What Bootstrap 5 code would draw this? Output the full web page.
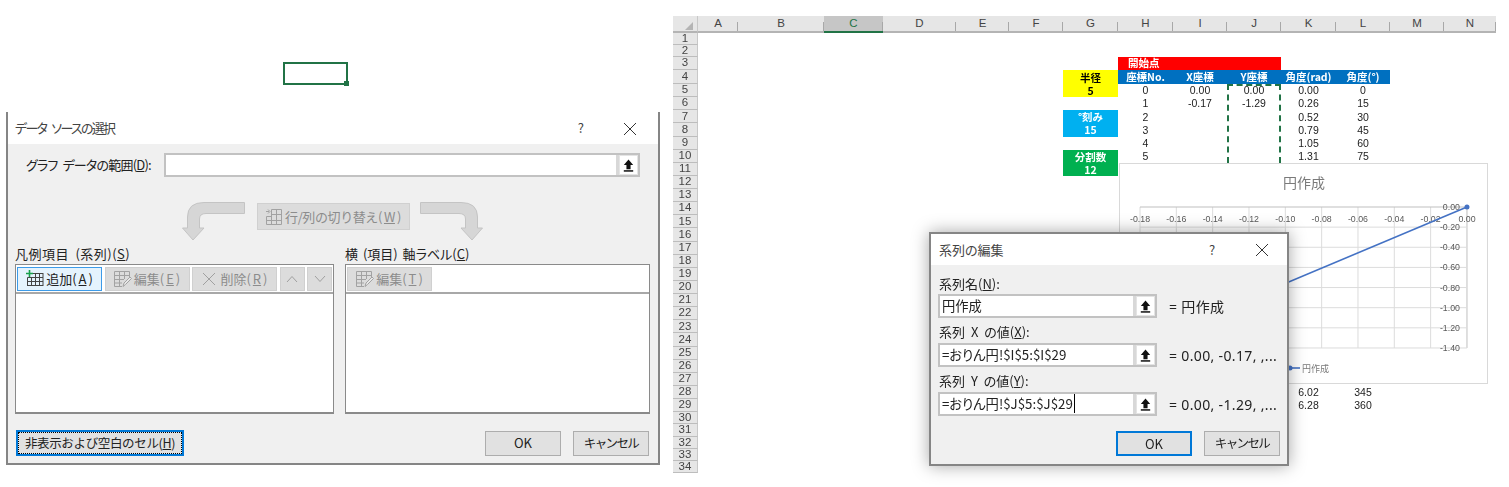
<!DOCTYPE html>
<html lang="ja">
<head>
<meta charset="UTF-8">
<title>データ ソースの選択</title>
<link href="https://cdn.jsdelivr.net/npm/bootstrap@5.3.0/dist/css/bootstrap.min.css" rel="stylesheet">
<style>
    body { background: #fff; width: 1509px; height: 487px; overflow: hidden; position: relative; font-family: "Noto Sans CJK JP", "Liberation Sans", sans-serif; font-size: 13px; color: #222; filter: blur(.3px); }

    /* dialogs */
    .win { position: absolute; background: #f0f0f0; font-feature-settings: "palt"; }
    .win-left { left: 6px; top: 112px; width: 654px; height: 353px; border: 2px solid #858585; border-top: 0; }
    .win-right { left: 929px; top: 232px; width: 360px; height: 234px; border: 2px solid #858585; box-shadow: 0 0 16px rgba(0,0,0,.35); z-index: 5; }
    .win-title { background: #fff; color: #444; font-size: 13px; padding-left: 8px; }
    .win-left .win-title { height: 32px; padding-left: 7px; padding-right: 3px; letter-spacing: -1.7px; word-spacing: 4px; }
    .win-right .win-title { height: 31px; }
    .title-help { width: 50px; text-align: center; font-size: 13px; }
    .title-close { width: 50px; text-align: center; line-height: 1; }

    .fld { display: flex; background: #fff; border: 2px solid #c2c2c2; height: 24px; }
    .fld-text { flex: 1; padding-left: 2px; line-height: 20px; font-size: 13.3px; white-space: nowrap; overflow: hidden; color: #222; }
    .fld-btn { width: 22px; background: #fff; border-left: 3px solid #d8d8d8; box-shadow: inset 0 0 0 1px #e4e4e4; display: flex; align-items: center; justify-content: center; }
    .caret-bar { border-right: 1px solid #000; padding-right: 1px; }

    .xl-btn { border: 1px solid #adadad; background: #e1e1e1; color: #222; border-radius: 0; font-size: 13px; padding: 0; display: flex; align-items: center; justify-content: center; }
    .xl-btn-off { color: #8c8c8c; background: #dcdcdc; border-color: #d0d0d0; }
    .xl-btn-default { border: 2px solid #0078d7; }
    .xl-btn-focus { border: 2px solid #0078d7; outline: 1px dotted #000; outline-offset: -3px; }
    .dlg-foot-btn { width: 76px; height: 25px; }
    .kana-tight { font-size: 12.5px; letter-spacing: -1.6px; }

    .src-body { padding: 9px 9px 0 7px; }
    .range-label { width: 149px; padding-left: 11px; white-space: nowrap; letter-spacing: -.8px; word-spacing: 3px; }
    .range-fld { width: 476px; }
    .swap-row { margin-top: 25px; height: 39px; }
    .swap-btn { width: 153px; height: 27px; margin: 1px 10px 0 12px; gap: 2px; letter-spacing: -.4px; }
    .list-area { margin-top: 6px; }
    .list-col-l { width: 319px; }
    .list-col-l .list-label { letter-spacing: .5px; word-spacing: 3px; }
    .list-col-r { width: 305px; margin-right: -1px; }
    .list-label { height: 17px; line-height: 14px; white-space: nowrap; word-spacing: 2px; }
    .list-box { height: 150px; background: #fff; border: 1px solid #8a8a8a; border-bottom-width: 2px; }
    .list-tools { height: 29px; border-bottom: 2px solid #a8a8a8; padding: 2px 1px; gap: 2.5px; }
    .tool-btn { width: 85px; height: 24px; gap: 2px; }
    .tool-btn-add { background: #e5f3fd; border: 1px solid #3d9be8; color: #222; }
    .tool-btn-s { width: 25px; height: 24px; }
    .src-foot { margin-top: 16px; }
    .hide-btn { width: 168px; height: 26px; margin-left: 1px; font-size: 12.5px; letter-spacing: -.35px; }

    .ser-body { padding: 9px 7px 0 7px; }
    .ser-label { padding-left: 1px; height: 25px; display: flex; align-items: flex-end; padding-bottom: 2px; white-space: pre; word-spacing: 3px; }
    .ser-label-first { height: 20px; padding-bottom: 1px; }
    .ser-fld { width: 219px; }
    .ser-val { margin-left: 12px; font-family: "Noto Sans", "Noto Sans CJK JP", sans-serif; font-size: 14px; letter-spacing: .35px; white-space: nowrap; }
    .ser-foot { margin-top: 15px; }

    /* selected cell on the left */
    .cell-sel { position: absolute; left: 283px; top: 62px; width: 65px; height: 23px; border: 2px solid #217346; }
    .cell-sel::after { content: ""; position: absolute; right: -3px; bottom: -3px; width: 5px; height: 5px; background: #217346; }

    /* spreadsheet */
    .sheet { position: absolute; left: 673px; top: 16px; display: grid; font-family: "Liberation Sans", sans-serif; font-size: 10.5px; color: #222; }
    .sheet-cell { display: flex; align-items: center; justify-content: center; white-space: nowrap; line-height: 1; }
    .col-head { background: #e6e6e6; border-bottom: 2px solid #b4b4b4; color: #444; font-size: 11.5px; position: relative; }
    .col-head::after { content: ""; position: absolute; right: 0; bottom: 0; width: 1px; height: 9px; background: #a8a8a8; }
    .col-head-on { background: #c6c6c6; color: #217346; border-bottom-color: #217346; }
    .row-head { background: #e6e6e6; border-bottom: 1px solid #bdbdbd; border-right: 1px solid #c8c8c8; color: #444; font-size: 11.5px; }
    .corner { background: #e6e6e6; border-bottom: 2px solid #b4b4b4; border-right: 1px solid #c8c8c8; }
    .corner svg { margin: 6px 0 0 8px; }
    .hd-cell { font-family: "Noto Sans CJK JP", sans-serif; font-weight: 700; font-size: 10.5px; color: #fff; }
    .hd-red { background: #f00; justify-content: flex-start; padding-left: 10px; }
    .hd-blue { background: #0070c0; }
    .param { flex-direction: column; font-family: "Noto Sans CJK JP", sans-serif; font-weight: 700; font-size: 10.5px; line-height: 13px; color: #fff; }
    .param-y { background: #ff0; color: #000; }
    .param-b { background: #00b0f0; }
    .param-g { background: #00b050; }
    .ants { border: 2px dashed #217346; border-bottom: 0; }

    .chart-box { position: absolute; left: 1119px; top: 163px; width: 369px; height: 221px; background: #fff; border: 1px solid #d9d9d9; z-index: 2; }
    .chart-box text { font-family: "Liberation Sans", sans-serif; font-size: 8.8px; fill: #595959; }
    .chart-box .cjk { font-family: "Noto Sans CJK JP", sans-serif; }
</style>
</head>
<body>

<svg width="0" height="0" class="position-absolute">
    <defs>
        <symbol id="ic-up" viewBox="0 0 16 16"><path d="M8 1.500 13 7.500H10.200V12H5.800V7.500H3Z" fill="#111"/><rect x="3" y="13" width="10" height="1.600" fill="#111"/></symbol>
        <symbol id="ic-add" viewBox="0 0 18 18">
            <path d="M7 3.500H17M1.500 7.500H17M1.500 11.500H17M1.500 15.500H17M1.500 7.500V16M5.500 7.500V16M9.500 3V16M13.500 3V16M17 3V16" stroke="#444" fill="none"/>
            <path d="M3.500 0V7M0 3.500H7" stroke="#17a04c" stroke-width="1.600" fill="none"/>
        </symbol>
        <symbol id="ic-edit" viewBox="0 0 18 18">
            <path d="M.5 1.500H15.500V7M.5 1.500V16.500H8M.5 5.500H15.500M.5 9.500H10M.5 13H8M5.500 1.500V16.500M10.500 1.500V9" stroke="#a2a2a2" fill="none"/>
            <path d="M9 16.500 10 13 16 7 17.500 8.500 11.500 14.500Z" stroke="#a2a2a2" fill="#e8e8e8"/>
        </symbol>
        <symbol id="ic-x" viewBox="0 0 14 14"><path d="M1 1 13 13M13 1 1 13" stroke="#a0a0a0" fill="none"/></symbol>
        <symbol id="ic-swap" viewBox="0 0 18 18">
            <path d="M6.500 1.500H16.500V16.500H1.500V8.500M1.500 12.500H16.500M6.500 1.500V16.500M11.500 1.500V16.500M6.500 6.500H16.500M1.500 8.500H6" stroke="#a2a2a2" fill="none"/>
            <path d="M1 3.500H4M3 1.500 5 3.500 3 5.500" stroke="#a2a2a2" fill="none"/>
        </symbol>
        <symbol id="ic-bend" viewBox="0 0 63 39"><path d="M62.500 .5H22Q5.500 .5 5.500 15V26H.5L11 38 22 26H17.500V17Q17.500 11.500 24 11.500H62.500Z" fill="#d6d6d6" stroke="#c4c4c4"/></symbol>
    </defs>
</svg>

<div class="cell-sel"></div>

<!-- データ ソースの選択 -->
<div class="win win-left">
    <div class="win-title d-flex align-items-center">
        <span class="flex-grow-1">データ ソースの選択</span>
        <span class="title-help">?</span>
        <span class="title-close"><svg width="14" height="14"><path d="M1 1 13 13M13 1 1 13" stroke="#333" fill="none"/></svg></span>
    </div>
    <div class="src-body">
        <div class="d-flex align-items-center">
            <label class="range-label">グラフ データの範囲(<u>D</u>):</label>
            <div class="fld range-fld">
                <div class="fld-text"></div>
                <div class="fld-btn"><svg width="15" height="15"><use href="#ic-up"/></svg></div>
            </div>
        </div>
        <div class="swap-row d-flex justify-content-center align-items-start">
            <svg width="63" height="39"><use href="#ic-bend"/></svg>
            <button class="xl-btn xl-btn-off swap-btn"><svg width="18" height="18"><use href="#ic-swap"/></svg>行/列の切り替え(<u>W</u>)</button>
            <svg width="63" height="39" style="transform: scaleX(-1)"><use href="#ic-bend"/></svg>
        </div>
        <div class="list-area d-flex justify-content-between">
            <div class="list-col-l">
                <div class="list-label">凡例項目 (系列)(<u>S</u>)</div>
                <div class="list-box">
                    <div class="list-tools d-flex">
                        <button class="xl-btn tool-btn tool-btn-add"><svg width="18" height="18"><use href="#ic-add"/></svg>追加(<u>A</u>)</button>
                        <button class="xl-btn xl-btn-off tool-btn"><svg width="18" height="18"><use href="#ic-edit"/></svg>編集(<u>E</u>)</button>
                        <button class="xl-btn xl-btn-off tool-btn"><svg width="14" height="14"><use href="#ic-x"/></svg>&nbsp;削除(<u>R</u>)</button>
                        <button class="xl-btn xl-btn-off tool-btn-s"><svg width="12" height="8"><path d="M1 7 6 1.500 11 7" stroke="#a0a0a0" fill="none"/></svg></button>
                        <button class="xl-btn xl-btn-off tool-btn-s"><svg width="12" height="8"><path d="M1 1 6 6.500 11 1" stroke="#a0a0a0" fill="none"/></svg></button>
                    </div>
                </div>
            </div>
            <div class="list-col-r">
                <div class="list-label">横 (項目) 軸ラベル(<u>C</u>)</div>
                <div class="list-box">
                    <div class="list-tools d-flex">
                        <button class="xl-btn xl-btn-off tool-btn"><svg width="18" height="18"><use href="#ic-edit"/></svg>編集(<u>T</u>)</button>
                    </div>
                </div>
            </div>
        </div>
        <div class="src-foot d-flex align-items-center">
            <button class="xl-btn xl-btn-focus hide-btn me-auto">非表示および空白のセル(<u>H</u>)</button>
            <button class="xl-btn dlg-foot-btn me-2 ms-1">OK</button>
            <button class="xl-btn dlg-foot-btn kana-tight ms-1">キャンセル</button>
        </div>
    </div>
</div>

<!-- spreadsheet, cells come from the script below -->
<div class="sheet" id="sheet"></div>
<div class="chart-box"><svg width="367" height="219" id="chart"></svg></div>

<!-- 系列の編集 -->
<div class="win win-right">
    <div class="win-title d-flex align-items-center">
        <span class="flex-grow-1">系列の編集</span>
        <span class="title-help">?</span>
        <span class="title-close"><svg width="14" height="14"><path d="M1 1 13 13M13 1 1 13" stroke="#333" fill="none"/></svg></span>
    </div>
    <div class="ser-body">
        <div class="ser-label ser-label-first">系列名(<u>N</u>):</div>
        <div class="d-flex align-items-center">
            <div class="fld ser-fld"><div class="fld-text">円作成</div><div class="fld-btn"><svg width="15" height="15"><use href="#ic-up"/></svg></div></div>
            <div class="ser-val">= 円作成</div>
        </div>
        <div class="ser-label">系列 X の値(<u>X</u>):</div>
        <div class="d-flex align-items-center">
            <div class="fld ser-fld"><div class="fld-text">=おりん円!$I$5:$I$29</div><div class="fld-btn"><svg width="15" height="15"><use href="#ic-up"/></svg></div></div>
            <div class="ser-val">= 0.00, -0.17, ,...</div>
        </div>
        <div class="ser-label">系列 Y の値(<u>Y</u>):</div>
        <div class="d-flex align-items-center">
            <div class="fld ser-fld"><div class="fld-text"><span class="caret-bar">=おりん円!$J$5:$J$29</span></div><div class="fld-btn"><svg width="15" height="15"><use href="#ic-up"/></svg></div></div>
            <div class="ser-val">= 0.00, -1.29, ,...</div>
        </div>
        <div class="ser-foot d-flex justify-content-end gap-2">
            <button class="xl-btn xl-btn-default dlg-foot-btn">OK</button>
            <button class="xl-btn dlg-foot-btn kana-tight ms-1">キャンセル</button>
        </div>
    </div>
</div>

<script src="https://cdn.jsdelivr.net/npm/bootstrap@5.3.0/dist/js/bootstrap.bundle.min.js"></script>
<script>
    const sheet = document.getElementById('sheet');
    const colNames = 'ABCDEFGHIJKLMN'.split('');
    const colWidths = [40, 86, 59, 73, 53, 54, 55, 55, 54, 54, 55, 54, 54, 52];

    // rows 1-4 and 30-34 are not the same height as the rest in the picture
    const rowHeights = [12, 12, 13, 14];
    for (let i = 5; i <= 29; i++) rowHeights.push(13.13);
    rowHeights.push(12.3, 12.3, 12.3, 12.3, 11.5);

    sheet.style.gridTemplateColumns = '25px ' + colWidths.map(w => w + 'px').join(' ');
    sheet.style.gridTemplateRows = '17px ' + rowHeights.map(h => h + 'px').join(' ');

    function addCell(col, row, text, cls, colSpan, rowSpan) {
        const el = document.createElement('div');
        el.className = 'sheet-cell ' + (cls || '');
        el.style.gridColumn = col + ' / span ' + (colSpan || 1);
        el.style.gridRow = (row + 1) + ' / span ' + (rowSpan || 1);
        el.innerHTML = text;
        sheet.appendChild(el);
    }

    // column 1 is the row header, A is column 2
    const colOf = name => colNames.indexOf(name) + 2;

    addCell(1, 0, '<svg width="9" height="9"><path d="M8 0V8H0Z" fill="#b4b4b4"/></svg>', 'corner');
    colNames.forEach(n => addCell(colOf(n), 0, n, 'col-head' + (n === 'C' ? ' col-head-on' : '')));
    rowHeights.forEach((h, i) => addCell(1, i + 1, i + 1, 'row-head'));

    addCell(colOf('H'), 3, '開始点', 'hd-cell hd-red', 3);
    ['座標No.', 'X座標', 'Y座標', '角度(rad)', '角度(°)'].forEach((t, i) => addCell(colOf('H') + i, 4, t, 'hd-cell hd-blue'));

    addCell(colOf('G'), 4, '<span>半径</span><span>5</span>', 'param param-y', 1, 2);
    addCell(colOf('G'), 7, '<span>°刻み</span><span>15</span>', 'param param-b', 1, 2);
    addCell(colOf('G'), 10, '<span>分割数</span><span>12</span>', 'param param-g', 1, 2);

    const data = [
        [5, '0', '0.00', '0.00', '0.00', '0'],
        [6, '1', '-0.17', '-1.29', '0.26', '15'],
        [7, '2', '', '', '0.52', '30'],
        [8, '3', '', '', '0.79', '45'],
        [9, '4', '', '', '1.05', '60'],
        [10, '5', '', '', '1.31', '75'],
        [28, '', '', '', '6.02', '345'],
        [29, '', '', '', '6.28', '360']
    ];
    data.forEach(r => {
        for (let i = 1; i < r.length; i++) {
            if (r[i] !== '') addCell(colOf('H') + i - 1, r[0], r[i]);
        }
    });
    addCell(colOf('J'), 5, '', 'ants', 1, 6);

    // chart: page coords minus the box origin
    const x0 = 20, xStep = 36.33, y0 = 43, yStep = 20.14;
    const grid = '#dcdcdc', axis = '#bfbfbf';
    let svg = '';
    for (let i = 0; i <= 9; i++) {
        const x = x0 + i * xStep;
        svg += `<line x1="${x}" y1="${y0}" x2="${x}" y2="${y0 + 7 * yStep}" stroke="${i === 9 ? axis : grid}"/>`;
        const lbl = i < 9 ? '-' + (0.18 - i * 0.02).toFixed(2) : '0.00';
        svg += `<text x="${x}" y="${y0 + 15}" text-anchor="middle">${lbl}</text>`;
    }
    for (let i = 0; i <= 7; i++) {
        const y = y0 + i * yStep;
        svg += `<line x1="${x0}" y1="${y}" x2="${x0 + 9 * xStep}" y2="${y}" stroke="${i === 0 ? axis : grid}"/>`;
        svg += `<text x="${x0 + 9 * xStep - 7}" y="${y + 3}" text-anchor="end">${i === 0 ? '0.00' : '-' + (i * 0.2).toFixed(2)}</text>`;
    }
    const px = v => x0 + 9 * xStep + v / 0.02 * xStep;
    const py = v => y0 - v / 0.2 * yStep;
    svg += `<line x1="${px(0)}" y1="${py(0)}" x2="${px(-0.17)}" y2="${py(-1.29)}" stroke="#4472c4" stroke-width="1.6"/>`;
    svg += `<circle cx="${px(0)}" cy="${py(0)}" r="2.5" fill="#4472c4"/>`;
    svg += `<text x="184" y="24" text-anchor="middle" class="cjk" style="font-size:14px;fill:#7a7a7a">円作成</text>`;
    svg += `<line x1="160" y1="204" x2="180" y2="204" stroke="#4472c4" stroke-width="1.6"/>`;
    svg += `<circle cx="170" cy="204" r="2.5" fill="#4472c4"/>`;
    svg += `<text x="182" y="207.500" class="cjk" style="font-size:9px;fill:#7a7a7a">円作成</text>`;
    document.getElementById('chart').innerHTML = svg;
</script>
</body>
</html>
